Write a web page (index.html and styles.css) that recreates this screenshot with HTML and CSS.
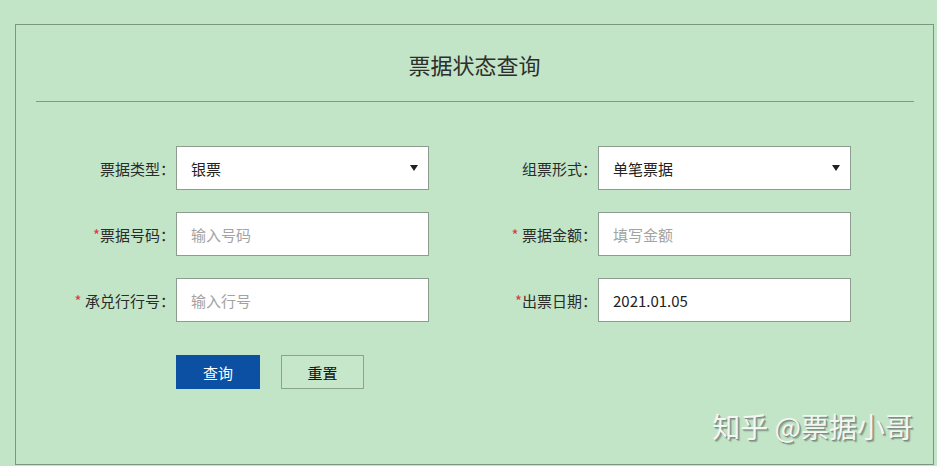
FILE: index.html
```html
<!DOCTYPE html>
<html lang="zh-CN">
<head>
<meta charset="utf-8">
<title>票据状态查询</title>
<link rel="stylesheet" href="styles.css">
</head>
<body>
<div class="panel">
  <h1 class="title">票据状态查询</h1>
  <div class="divider"></div>
  <div class="form">
    <div class="field">
      <label class="label">票据类型：</label>
      <div class="control select"><span class="value">银票</span><span class="arrow"></span></div>
    </div>
    <div class="field">
      <label class="label">组票形式：</label>
      <div class="control select"><span class="value">单笔票据</span><span class="arrow"></span></div>
    </div>
    <div class="field">
      <label class="label"><span class="req">*</span>票据号码：</label>
      <input class="control" type="text" placeholder="输入号码">
    </div>
    <div class="field">
      <label class="label"><span class="req">*</span> 票据金额：</label>
      <input class="control" type="text" placeholder="填写金额">
    </div>
    <div class="field">
      <label class="label"><span class="req">*</span> 承兑行行号：</label>
      <input class="control" type="text" placeholder="输入行号">
    </div>
    <div class="field">
      <label class="label"><span class="req">*</span>出票日期：</label>
      <input class="control" type="text" value="2021.01.05">
    </div>
  </div>
  <div class="actions">
    <button class="btn btn-primary" type="button">查询</button>
    <button class="btn btn-default" type="button">重置</button>
  </div>
  <div class="watermark">知乎 @票据小哥</div>
</div>
</body>
</html>
```
FILE: styles.css
```css
* { box-sizing: border-box; }

html, body {
  margin: 0;
  padding: 0;
  background: #c3e5c7;
  font-family: "Noto Sans CJK SC", "Noto Sans", "Liberation Sans", sans-serif;
  color: #333;
}

body {
  padding: 24px 0 0 15px;
  overflow: hidden;
}

.panel {
  position: relative;
  width: 919px;
  height: 441px;
  border: 1px solid #7b977f;
}

.title {
  margin: 0;
  padding-top: 24px;
  font-size: 22px;
  line-height: 30px;
  font-weight: normal;
  text-align: center;
  color: #2e2e2e;
}

.divider {
  height: 1px;
  margin: 22px 19px 0 20px;
  background: #7f9a84;
}

.form {
  display: grid;
  grid-template-columns: 393px 393px;
  column-gap: 29px;
  row-gap: 22px;
  padding: 44px 0 0 20px;
}

.field {
  display: flex;
  align-items: center;
}

.label {
  width: 140px;
  padding-right: 1px;
  text-align: right;
  font-size: 15px;
  color: #2b2b2b;
  white-space: pre;
}

.req {
  color: #d8393c;
}

.control {
  width: 253px;
  height: 44px;
  border: 1px solid #8c9c8f;
  background: #fff;
  font-family: inherit;
  font-size: 15px;
  color: #222;
  padding: 0 10px 0 14px;
  margin: 0;
  outline: none;
  border-radius: 0;
}

.control::placeholder {
  color: #a3a3a3;
}

.select {
  display: flex;
  align-items: center;
  justify-content: space-between;
}

.arrow {
  width: 0;
  height: 0;
  border-left: 4px solid transparent;
  border-right: 4px solid transparent;
  border-top: 6px solid #222;
}

.actions {
  display: flex;
  gap: 21px;
  padding: 33px 0 0 160px;
}

.btn {
  width: 84px;
  height: 34px;
  font-family: inherit;
  font-size: 15px;
  border-radius: 0;
  padding: 0;
  margin: 0;
  cursor: pointer;
}

.btn-primary {
  background: #0b50a3;
  border: 1px solid #0b50a3;
  color: #fff;
}

.btn-default {
  width: 83px;
  background: #c6e7ca;
  border: 1px solid #8aa38e;
  color: #111;
}

.watermark {
  position: absolute;
  right: 20px;
  bottom: 21px;
  font-size: 28px;
  line-height: 34px;
  color: #f3f6f3;
  text-shadow: 1px 1px 0 #7f8f82, 2px 2px 1px rgba(90, 110, 95, 0.5);
  white-space: pre;
}
```
